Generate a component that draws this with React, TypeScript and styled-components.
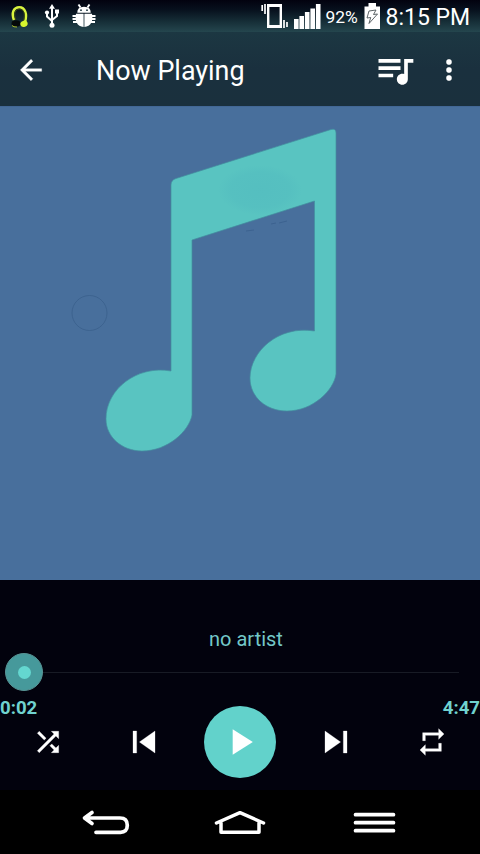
import React from 'react';
import styled, { createGlobalStyle } from 'styled-components';

const GlobalStyle = createGlobalStyle`
  * { box-sizing: border-box; }
  body { margin: 0; background: #000; overflow: hidden; }
  svg { display: block; flex: none; }
  button { border: 0; padding: 0; margin: 0; background: none; color: inherit; font: inherit; }
`;

const Screen = styled.div`
  display: flex;
  flex-direction: column;
  width: 480px;
  height: 854px;
  background: #02020d;
  color: #fff;
  font-family: Roboto, 'Liberation Sans', sans-serif;
`;

const StatusBar = styled.header`
  display: flex;
  align-items: center;
  justify-content: space-between;
  height: 32px;
  padding: 0 9.5px 0 9px;
  background: linear-gradient(#02020f 0%, #07101d 30%, #173039 70%, #25464e 100%);
`;

const StatusGroup = styled.div<{ $gap: number }>`
  display: flex;
  align-items: center;
  height: 32px;
  gap: ${(p) => p.$gap}px;
`;

const StatusText = styled.span<{ $size: number; $width: number; $drop: number }>`
  width: ${(p) => p.$width}px;
  font-size: ${(p) => p.$size}px;
  line-height: 32px;
  padding-top: ${(p) => p.$drop}px;
  white-space: nowrap;
`;

const AppBar = styled.div`
  display: flex;
  align-items: center;
  height: 74px;
  padding: 1px 15px 0;
  background: linear-gradient(#1c3742, #1a303e 50%, #1a303d);
`;

const Title = styled.h1`
  flex: 1;
  margin: 0 0 0 49px;
  padding-top: 2px;
  font-size: 26.9px;
  font-weight: 400;
  line-height: 32px;
`;

const IconButton = styled.button<{ $size: number }>`
  display: grid;
  place-items: center;
  width: ${(p) => p.$size}px;
  height: ${(p) => p.$size}px;
`;

const AppActions = styled.div`
  display: flex;
  align-items: center;
  gap: 16.500px;
`;

const Artwork = styled.main`
  height: 474px;
  background: #486f9c;
  border-top: 1px solid #426795;
`;

const Player = styled.section`
  display: flex;
  flex-direction: column;
  height: 210px;
  padding-top: 46px;
`;

const Artist = styled.div`
  height: 26px;
  font-size: 20px;
  line-height: 26px;
  text-align: center;
  color: #73c8c8;
  padding-left: 12px;
`;

const SeekBar = styled.div`
  display: flex;
  align-items: center;
  height: 38px;
  margin-top: 1px;
  padding: 0 21px 0 5px;
`;

const Thumb = styled.div`
  display: grid;
  place-items: center;
  width: 38px;
  height: 38px;
  border-radius: 50%;
  border: 1px solid #579394;
  background: #46999b;
  &::after {
    content: '';
    width: 13px;
    height: 13px;
    border-radius: 50%;
    background: #64d7d0;
  }
`;

const Track = styled.div`
  flex: 1;
  height: 1px;
  background: #181b25;
`;

const Times = styled.div`
  display: flex;
  justify-content: space-between;
  height: 22px;
  margin-top: 6px;
  font-size: 18.6px;
  font-weight: 700;
  line-height: 22px;
  color: #70d2cf;
`;

const Controls = styled.div`
  display: grid;
  grid-template-columns: repeat(5, 1fr);
  place-items: center;
  height: 72px;
  margin-top: -13px;
`;

const PlayButton = styled.button`
  display: grid;
  place-items: center;
  width: 72px;
  height: 72px;
  border-radius: 50%;
  background: #62d2cb;
  color: #fff;
`;

const NavBar = styled.nav`
  display: grid;
  grid-template-columns: 133px 139px 43px;
  align-items: center;
  height: 64px;
  padding-left: 81px;
  background: #000;
`;

const Icon = ({ d, size = 32, weight = 0 }: { d: string; size?: number; weight?: number }) => (
  <svg width={size} height={size} viewBox="0 0 24 24" fill="currentColor" stroke="currentColor" strokeWidth={weight}>
    <path d={d} />
  </svg>
);

const paths = {
  back: 'M20 11H7.83l5.59-5.59L12 4l-8 8 8 8 1.41-1.41L7.83 13H20z',
  queue:
    'M15 6H3v2h12V6zm0 4H3v2h12v-2zM3 16h8v-2H3v2zM17 6v8.18c-.31-.11-.65-.18-1-.18-1.66 0-3 1.34-3 3s1.34 3 3 3 3-1.34 3-3V8h3V6h-5z',
  more: 'M12 8a2 2 0 1 0 0-4 2 2 0 0 0 0 4zm0 2a2 2 0 1 0 0 4 2 2 0 0 0 0-4zm0 6a2 2 0 1 0 0 4 2 2 0 0 0 0-4z',
  shuffle:
    'M10.59 9.17 5.41 4 4 5.41l5.17 5.17zM14.5 4l2.04 2.04L4 18.59 5.41 20 17.96 7.46 20 9.5V4zm.33 9.41-1.41 1.41 3.13 3.13L14.5 20H20v-5.5l-2.04 2.04z',
  previous: 'M6 6h2v12H6zm3.5 6 8.5 6V6z',
  play: 'M8 5v14l11-7z',
  next: 'm6 18 8.5-6L6 6zM16 6v12h2V6z',
  repeat: 'M7 7h10v3l4-4-4-4v3H5v6h2zm10 10H7v-3l-4 4 4 4v-3h12v-6h-2z',
};

const HeadphonesIcon = () => (
  <svg width="22" height="24" viewBox="0 0 22 24" fill="none">
    <path d="M5 16C2.200 9 4.500 3.300 10.300 3.300S18.500 10 16 18" stroke="#d9f33f" strokeWidth="2.500" />
    <path d="M6.800 16C4.500 10 6 5.200 10.300 5.200S16.500 9 14.500 17" stroke="#3c4a13" strokeWidth="1" />
    <ellipse cx="7" cy="19.500" rx="4.500" ry="3.300" fill="#05090a" />
    <path d="M3 21.500q1.500 1.800 5 1.500" stroke="#a7bd2b" strokeWidth="1" />
    <ellipse cx="15" cy="19.800" rx="3.700" ry="3.100" fill="#d7f52e" transform="rotate(-20 15 19.800)" />
  </svg>
);

const UsbIcon = () => (
  <svg width="16" height="24" viewBox="0 0 16 24" fill="none" stroke="#fff" strokeWidth="2">
    <path d="M8 4v16M3 9v3.500l5 4.500M13 8v4l-5 4" />
    <path d="m8 0 3 4.800H5z" fill="#fff" stroke="none" />
    <circle cx="8" cy="21.300" r="2.500" fill="#fff" stroke="none" />
    <circle cx="3" cy="8.500" r="2.100" fill="#fff" stroke="none" />
    <path d="M11 5.500h4v4h-4z" fill="#fff" stroke="none" />
  </svg>
);

const BugIcon = () => (
  <svg width="24" height="24" viewBox="0 0 24 24" fill="#fff">
    <path d="M5.300 8.800Q5 2.800 12 2.800T18.700 8.800z" />
    <path d="M4 9.800h7.600V23C5 22.500 2.500 17 4 9.800zM12.400 9.800H20c1.500 7.200-1 12.700-7.600 13.200z" />
    <path d="m6.500.5 2 3m9-3-2 3M.5 12h4M.5 15h4M1 18h5M19.500 12h4M19.500 15h4M18 18h5" stroke="#fff" strokeWidth="1.900" />
    <circle cx="9" cy="6.200" r=".9" fill="#17303a" />
    <circle cx="15" cy="6.200" r=".9" fill="#17303a" />
  </svg>
);

const VibrateIcon = () => (
  <svg width="28" height="28" viewBox="0 0 28 28" fill="none" stroke="#fff">
    <path d="M7.200 3.200h12.600v21.600H7.200z" strokeWidth="2.400" />
    <path d="M6 3.500h15M6 24.500h15" strokeWidth="3" />
    <path d="M1.200 3v6M4 2v10M23 18v8M26 20v5" strokeWidth="1.700" />
  </svg>
);

const SignalIcon = () => (
  <svg width="27" height="26" viewBox="0 0 27 26" fill="#fff">
    <path d="M0 16h4.600v10H0zM5.400 13H10v13H5.400zM10.900 9h4.600v17h-4.600zM16.400 5.500H21V26h-4.600zM21.900 1h4.600v25h-4.600z" />
  </svg>
);

const BatteryIcon = () => (
  <svg width="17" height="26" viewBox="0 0 17 26">
    <path d="M4.500 0h7.500v3.500h4V26H.5V3.500h4z" fill="#fff" />
    <path d="m5 8 7-1-2.500 4.500 4-.5L5 20.500l1.700-6-3.700.5z" fill="#fff" stroke="#4c5558" strokeWidth=".9" />
  </svg>
);

const MusicNote = () => (
  <svg width="480" height="473" viewBox="0 107 480 473">
    <defs>
      <radialGradient id="sheen">
        <stop offset="0" stopColor="#52bbbf" />
        <stop offset=".7" stopColor="#52bbbf" stopOpacity=".75" />
        <stop offset="1" stopColor="#52bbbf" stopOpacity="0" />
      </radialGradient>
    </defs>
    <path
      d="M171 185q0-5 5-6.500L331 129.500q5-1.500 5 3.500V374C334 390 313 411 287 411C266 411 250 397 250 378C250 352 278 325 314.500 331V201L192 240V415C189 431 168 451 142 451C122 451 106 437 106 419C106 389 137 365 171 371z"
      fill="#59c4c1"
      stroke="#448f9f"
      strokeWidth=".7"
    />
    <ellipse cx="260" cy="190" rx="42" ry="25" fill="url(#sheen)" opacity=".6" />
    <circle cx="89.500" cy="313" r="17.500" fill="none" stroke="#3a608b" strokeWidth=".8" />
    <path d="m246 231 8-1M271 224l5-1M279 223l8-2" stroke="#3b618e" strokeWidth=".9" />
  </svg>
);

const NavBackIcon = () => (
  <svg width="50" height="28" viewBox="0 0 50 28" fill="none" stroke="#fff" strokeWidth="3.700" strokeLinecap="round" strokeLinejoin="round">
    <path d="M4 10h35q7.300 0 7.300 7.300T39 24.300H15M11 4.500 3.500 10l7.500 5.500" />
  </svg>
);

const NavHomeIcon = () => (
  <svg width="52" height="28" viewBox="0 0 52 28" fill="none" stroke="#fff" strokeWidth="3.500" strokeLinecap="round" strokeLinejoin="round">
    <path d="M2.500 15 26 4.700 49.500 15M7 15v9.300h38V15" />
  </svg>
);

const NavMenuIcon = () => (
  <svg width="43" height="28" viewBox="0 0 43 28" fill="none" stroke="#fff" strokeWidth="3.700" strokeLinecap="round">
    <path d="M2.500 6.700h38M2.500 14.700h38M2.500 22.700h38" />
  </svg>
);

export default function App() {
  return (
    <Screen>
      <GlobalStyle />
      <StatusBar>
        <StatusGroup $gap={12.5}>
          <HeadphonesIcon />
          <UsbIcon />
          <BugIcon />
        </StatusGroup>
        <StatusGroup $gap={5}>
          <VibrateIcon />
          <SignalIcon />
          <StatusText $size={17.4} $width={33} $drop={2}>92%</StatusText>
          <BatteryIcon />
          <StatusText $size={23} $width={85} $drop={3}>8:15 PM</StatusText>
        </StatusGroup>
      </StatusBar>
      <AppBar>
        <IconButton $size={32} aria-label="Back"><Icon d={paths.back} weight={0.25} /></IconButton>
        <Title>Now Playing</Title>
        <AppActions>
          <IconButton $size={44} aria-label="Queue"><Icon d={paths.queue} size={44} /></IconButton>
          <IconButton $size={32} aria-label="More options"><Icon d={paths.more} weight={0.2} /></IconButton>
        </AppActions>
      </AppBar>
      <Artwork><MusicNote /></Artwork>
      <Player>
        <Artist>no artist</Artist>
        <SeekBar>
          <Thumb />
          <Track />
        </SeekBar>
        <Times>
          <span>0:02</span>
          <span>4:47</span>
        </Times>
        <Controls>
          <IconButton $size={44} aria-label="Shuffle"><Icon d={paths.shuffle} weight={0.25} /></IconButton>
          <IconButton $size={44} aria-label="Previous"><Icon d={paths.previous} size={44} weight={0.15} /></IconButton>
          <PlayButton aria-label="Play"><Icon d={paths.play} size={44} /></PlayButton>
          <IconButton $size={44} aria-label="Next"><Icon d={paths.next} size={44} weight={0.15} /></IconButton>
          <IconButton $size={44} aria-label="Repeat"><Icon d={paths.repeat} weight={0.25} /></IconButton>
        </Controls>
      </Player>
      <NavBar>
        <IconButton $size={50} aria-label="System back"><NavBackIcon /></IconButton>
        <IconButton $size={52} aria-label="Home"><NavHomeIcon /></IconButton>
        <IconButton $size={43} aria-label="Menu"><NavMenuIcon /></IconButton>
      </NavBar>
    </Screen>
  );
}
